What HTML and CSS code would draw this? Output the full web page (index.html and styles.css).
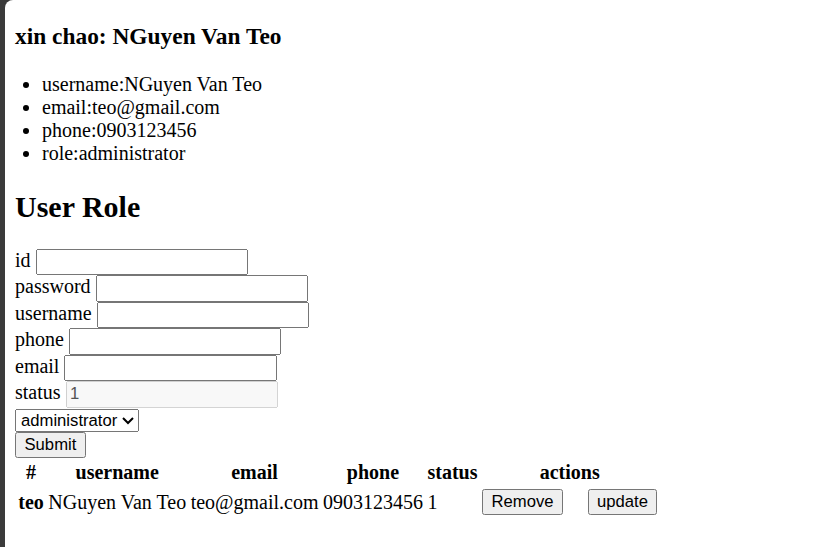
FILE: index.html
```html
<!DOCTYPE html>
<html>
<head>
<meta charset="utf-8">
<title>User Role</title>
<link rel="stylesheet" href="styles.css">
</head>
<body>
<div class="page">
  <h3>xin chao: NGuyen Van Teo</h3>
  <ul class="info">
    <li>username:NGuyen Van Teo</li>
    <li>email:teo@gmail.com</li>
    <li>phone:0903123456</li>
    <li>role:administrator</li>
  </ul>
  <h2>User Role</h2>
  <form class="user-form">
    <div class="row">id <input type="text"></div>
    <div class="row">password <input type="password"></div>
    <div class="row">username <input type="text"></div>
    <div class="row">phone <input type="text"></div>
    <div class="row">email <input type="text"></div>
    <div class="row">status <input type="text" value="1" disabled></div>
    <div class="row"><select><option>administrator</option><option>user</option></select></div>
    <div class="row"><button type="button">Submit</button></div>
  </form>
  <table class="users">
    <thead>
      <tr>
        <th>#</th>
        <th>username</th>
        <th>email</th>
        <th>phone</th>
        <th>status</th>
        <th colspan="2">actions</th>
      </tr>
    </thead>
    <tbody>
      <tr>
        <th>teo</th>
        <td>NGuyen Van Teo</td>
        <td>teo@gmail.com</td>
        <td>0903123456</td>
        <td>1</td>
        <td class="act-remove"><button type="button">Remove</button></td>
        <td><button type="button">update</button></td>
      </tr>
    </tbody>
  </table>
</div>
</body>
</html>
```
FILE: styles.css
```css
html {
  background: #3b3b3b;
}

body {
  margin: 0 0 0 5px;
  background: #ffffff;
  border-top-left-radius: 8px;
  min-height: 100vh;
  display: flow-root;
}

.page {
  zoom: 1.25;
  margin: 0 8px;
  font-family: "Liberation Serif", "Times New Roman", serif;
  font-size: 16px;
  color: #000;
}

.page h3 {
  margin-top: 18px;
}

.info {
  padding-left: 21.6px;
}

.user-form input,
.user-form select,
.user-form button,
.users button {
  font-family: "Liberation Sans", Arial, sans-serif;
}

.user-form input {
  box-sizing: border-box;
  width: 170px;
}

.users td.act-remove {
  padding-right: 17px;
}
```
